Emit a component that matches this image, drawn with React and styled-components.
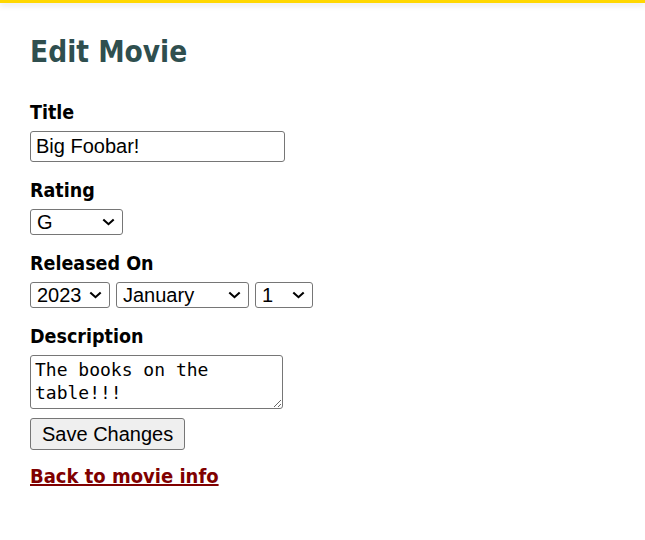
import React from "react";
import styled, { createGlobalStyle } from "styled-components";

const GlobalStyle = createGlobalStyle`
  body {
    margin: 0;
    background: #fff;
    font-family: "DejaVu Sans Condensed", "DejaVu Sans", Verdana, sans-serif;
    font-stretch: condensed;
    color: #000;
  }
`;

const TopBar = styled.div`
  height: 3px;
  background: #ffd700;
  box-shadow: 0 2px 6px rgba(0, 0, 0, 0.15);
`;

const Page = styled.div`
  padding: 32px 30px 20px;
`;

const Heading = styled.h1`
  margin: 0 0 30px;
  font-size: 29.5px;
  line-height: 34px;
  font-weight: bold;
  color: #2f4f4f;
`;

const Form = styled.form`
  display: flex;
  flex-direction: column;
  align-items: flex-start;
`;

const Field = styled.div`
  display: flex;
  flex-direction: column;
  align-items: flex-start;
  margin-bottom: 15px;
`;

const Label = styled.label`
  font-weight: bold;
  font-size: 19.5px;
  line-height: 28px;
  margin-bottom: 4px;
`;

const TextInput = styled.input`
  width: 255px;
  box-sizing: border-box;
  height: 31px;
  font-family: "Liberation Sans", Arial, sans-serif;
  font-stretch: normal;
  font-size: 20px;
  padding: 1px 5px;
  border: 1px solid #767676;
  border-radius: 3px;
`;

const SelectWrap = styled.div`
  position: relative;
  display: inline-flex;
`;

const Select = styled.select`
  appearance: none;
  box-sizing: border-box;
  height: 26px;
  width: ${(p) => p.$w}px;
  font-family: "Liberation Sans", Arial, sans-serif;
  font-stretch: normal;
  font-size: 20px;
  color: #000;
  border: 1px solid #767676;
  border-radius: 3px;
  background: #fff;
  padding: 0 6px;
`;

const Chevron = styled.svg`
  position: absolute;
  right: 8px;
  top: 9px;
  width: 13px;
  height: 8px;
  pointer-events: none;
`;

const DateRow = styled.div`
  display: flex;
  gap: 6px;
`;

const TextArea = styled.textarea`
  width: 253px;
  height: 54px;
  box-sizing: border-box;
  font-family: "DejaVu Sans Mono", monospace;
  font-stretch: normal;
  font-size: 18px;
  line-height: 23px;
  padding: 2px 4px;
  border: 1px solid #767676;
  border-radius: 3px;
`;

const Button = styled.button`
  font-family: "Liberation Sans", Arial, sans-serif;
  font-stretch: normal;
  font-size: 20px;
  height: 32px;
  padding: 0 11px;
  border: 1px solid #767676;
  border-radius: 3px;
  background: #efefef;
  margin-top: -6px;
`;

const BackLink = styled.a`
  display: inline-block;
  margin-top: 14px;
  font-weight: bold;
  font-size: 20px;
  line-height: 24px;
  color: #800000;
  text-decoration: underline;
`;

const Dropdown = ({ width, value, options }) => (
  <SelectWrap>
    <Select $w={width} defaultValue={value}>
      {options.map((o) => (
        <option key={o}>{o}</option>
      ))}
    </Select>
    <Chevron viewBox="0 0 13 8">
      <path
        d="M1.3 1.5 L6.5 6.2 L11.7 1.5"
        fill="none"
        stroke="#000"
        strokeWidth="2.1"
      />
    </Chevron>
  </SelectWrap>
);

export default function App() {
  return (
    <>
      <GlobalStyle />
      <TopBar />
      <Page>
        <Heading>Edit Movie</Heading>
        <Form>
          <Field>
            <Label>Title</Label>
            <TextInput defaultValue="Big Foobar!" />
          </Field>
          <Field>
            <Label>Rating</Label>
            <Dropdown width={93} value="G" options={["G", "PG", "PG-13", "R"]} />
          </Field>
          <Field>
            <Label>Released On</Label>
            <DateRow>
              <Dropdown width={80} value="2023" options={["2023", "2022"]} />
              <Dropdown
                width={133}
                value="January"
                options={["January", "February", "March"]}
              />
              <Dropdown width={58} value="1" options={["1", "2", "3"]} />
            </DateRow>
          </Field>
          <Field>
            <Label>Description</Label>
            <TextArea defaultValue="The books on the table!!!" />
          </Field>
          <Button type="button">Save Changes</Button>
        </Form>
        <BackLink href="#">Back to movie info</BackLink>
      </Page>
    </>
  );
}
